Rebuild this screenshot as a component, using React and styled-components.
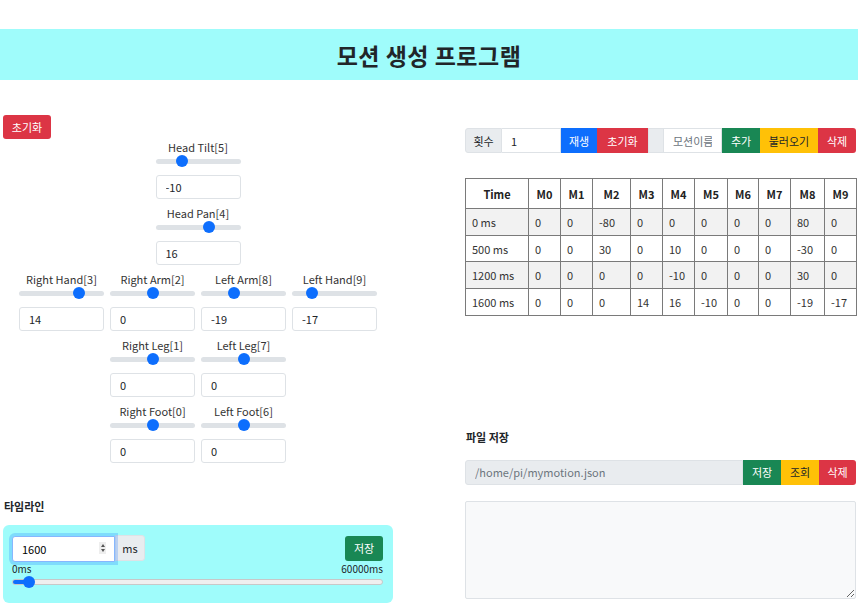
import React from "react";
import styled, { createGlobalStyle } from "styled-components";

const GlobalStyle = createGlobalStyle`
  body {
    margin: 0;
    background: white;
    color: #212529;
    font-family: "Noto Sans CJK KR", "Noto Sans", sans-serif;
  }
  * { box-sizing: border-box; }
`;

const colors = {
  blue: "#0d6efd",
  red: "#dc3545",
  green: "#198754",
  yellow: "#ffc107",
  cyan: "#9ffcfb",
};

const Header = styled.header`
  margin-top: 29px;
  height: 51px;
  background: ${colors.cyan};
  display: flex;
  align-items: center;
  justify-content: center;
`;

const Title = styled.h1`
  margin: 0;
  font-size: 23px;
  font-weight: 700;
  letter-spacing: 0.5px;
`;

const Main = styled.main`
  display: grid;
  grid-template-columns: 390px 391px;
  column-gap: 72px;
  padding: 0 2px 0 3px;
`;

const LeftCol = styled.section`
  padding-top: 33px;
`;

const RightCol = styled.section`
  padding-top: 48px;
`;

const Button = styled.button`
  height: ${(p) => p.h || 25}px;
  width: ${(p) => p.w}px;
  border: none;
  border-radius: ${(p) => (p.round ? "3px" : "0")};
  background: ${(p) => colors[p.color]};
  color: ${(p) => (p.color === "yellow" ? "#212529" : "white")};
  font-family: inherit;
  font-size: 11px;
  padding: 0;
  flex-shrink: 0;
  &:last-child {
    border-radius: ${(p) => (p.round ? "3px" : "0 3px 3px 0")};
  }
`;

const Sliders = styled.div`
  margin-top: 1px;
  display: flex;
  flex-direction: column;
`;

const SliderRow = styled.div`
  display: flex;
  justify-content: center;
  gap: 6px;
`;

const Group = styled.div`
  width: 85px;
  display: flex;
  flex-direction: column;
  align-items: center;
  padding-bottom: 7px;
`;

const Label = styled.div`
  font-size: 11px;
  line-height: 14px;
  color: #333;
`;

const Range = styled.input`
  -webkit-appearance: none;
  appearance: none;
  width: 100%;
  height: 14px;
  margin: 0;
  background: transparent;
  &::-webkit-slider-runnable-track {
    height: 5px;
    border-radius: 3px;
    background: #dee2e6;
  }
  &::-webkit-slider-thumb {
    -webkit-appearance: none;
    width: 12px;
    height: 12px;
    border-radius: 50%;
    background: ${colors.blue};
    margin-top: -3.5px;
  }
`;

const Field = styled.input`
  width: 100%;
  height: 24px;
  margin-top: 7px;
  border: 1px solid #dee2e6;
  border-radius: 3px;
  padding: 0 9px;
  font-family: inherit;
  font-size: 11px;
  color: #212529;
  background: white;
  outline: none;
`;

const SectionTitle = styled.div`
  font-size: 11px;
  line-height: 14px;
  font-weight: 700;
  margin-top: ${(p) => p.top}px;
  padding-left: 1px;
`;

const TimelineBox = styled.div`
  margin-top: 12px;
  background: ${colors.cyan};
  border-radius: 6px;
  height: 78px;
  padding: 10px 10px 0 9px;
`;

const TimelineTop = styled.div`
  display: flex;
  align-items: center;
  justify-content: space-between;
`;

const TimeGroup = styled.div`
  display: flex;
  align-items: center;
`;

const TimeInputWrap = styled.div`
  position: relative;
  width: 103px;
  height: 26px;
`;

const TimeInput = styled.input`
  width: 100%;
  height: 100%;
  border: 1px solid #86b7fe;
  border-radius: 3px 0 0 3px;
  box-shadow: 0 0 0 3px rgba(13, 110, 253, 0.22);
  padding: 0 9px;
  font-family: inherit;
  font-size: 11px;
  outline: none;
`;

const Spinner = styled.div`
  position: absolute;
  right: 9px;
  top: 7px;
  width: 7px;
  height: 12px;
  background: #eee;
  display: flex;
  flex-direction: column;
  align-items: center;
  justify-content: center;
  gap: 2px;
  &::before,
  &::after {
    content: "";
    border-left: 2px solid transparent;
    border-right: 2px solid transparent;
  }
  &::before { border-bottom: 3px solid #555; }
  &::after { border-top: 3px solid #555; }
`;

const Addon = styled.span`
  display: flex;
  align-items: center;
  justify-content: center;
  width: ${(p) => p.w}px;
  height: ${(p) => p.h || 25}px;
  background: #e9ecef;
  border: 1px solid #dee2e6;
  border-radius: ${(p) => p.radius || "0"};
  font-size: 11px;
  color: #212529;
  flex-shrink: 0;
`;

const ScaleRow = styled.div`
  display: flex;
  justify-content: space-between;
  font-size: 10px;
  line-height: 12px;
  margin-top: 2px;
`;

const TimeRange = styled.input`
  -webkit-appearance: none;
  appearance: none;
  display: block;
  width: 100%;
  height: 12px;
  margin: 1px 0 0;
  background: transparent;
  &::-webkit-slider-runnable-track {
    height: 6px;
    border-radius: 3px;
    border: 1px solid #c8c8c8;
    background: linear-gradient(
      to right,
      ${colors.blue} 0 ${(p) => p.$fill}%,
      #efefef ${(p) => p.$fill}% 100%
    );
  }
  &::-webkit-slider-thumb {
    -webkit-appearance: none;
    width: 12px;
    height: 12px;
    border-radius: 50%;
    background: ${colors.blue};
    margin-top: -4px;
  }
`;

const Toolbar = styled.div`
  display: flex;
  height: 25px;
  margin-top: ${(p) => p.top || 0}px;
`;

const BarInput = styled.input`
  width: ${(p) => p.w}px;
  height: 25px;
  border: 1px solid #dee2e6;
  border-left: none;
  padding: 0 9px;
  font-family: inherit;
  font-size: 11px;
  color: #212529;
  background: ${(p) => (p.disabled ? "#e9ecef" : "white")};
  outline: none;
  flex-shrink: 0;
  &::placeholder { color: #6c757d; }
  &:first-child {
    border-left: 1px solid #dee2e6;
    border-radius: 3px 0 0 3px;
  }
`;

const Table = styled.table`
  margin-top: 25px;
  width: 391px;
  border-collapse: collapse;
  table-layout: fixed;
  font-size: 11px;
  color: #333;
`;

const Th = styled.th`
  height: 30px;
  border: 1.5px solid #7a7a7a;
  font-weight: 700;
  text-align: center;
  color: #222;
  width: ${(p) => p.w}px;
`;

const Tr = styled.tr`
  background: ${(p) => (p.striped ? "#f2f2f2" : "white")};
`;

const Td = styled.td`
  height: 26.7px;
  border: 1.5px solid #7a7a7a;
  padding: 0 6px;
`;

const TextArea = styled.textarea`
  display: block;
  margin-top: 16px;
  width: 391px;
  height: 98px;
  border: 1px solid #dee2e6;
  border-radius: 2px;
  background: #f8f9fa;
  resize: vertical;
`;

const joints = [
  [["Head Tilt[5]", "-10", 28]],
  [["Head Pan[4]", "16", 65]],
  [
    ["Right Hand[3]", "14", 74],
    ["Right Arm[2]", "0", 50],
    ["Left Arm[8]", "-19", 37],
    ["Left Hand[9]", "-17", 19],
  ],
  [
    ["Right Leg[1]", "0", 50],
    ["Left Leg[7]", "0", 50],
  ],
  [
    ["Right Foot[0]", "0", 50],
    ["Left Foot[6]", "0", 50],
  ],
];

const colWidths = [63, 32, 32, 38, 32, 32, 33, 31, 32, 34, 32];
const heads = ["Time", "M0", "M1", "M2", "M3", "M4", "M5", "M6", "M7", "M8", "M9"];
const rows = [
  ["0 ms", 0, 0, -80, 0, 0, 0, 0, 0, 80, 0],
  ["500 ms", 0, 0, 30, 0, 10, 0, 0, 0, -30, 0],
  ["1200 ms", 0, 0, 0, 0, -10, 0, 0, 0, 30, 0],
  ["1600 ms", 0, 0, 0, 14, 16, -10, 0, 0, -19, -17],
];

const JointControl = ({ label, value, pos }) => (
  <Group>
    <Label>{label}</Label>
    <Range type="range" min="0" max="100" defaultValue={pos} />
    <Field defaultValue={value} />
  </Group>
);

export default function App() {
  const time = 1600;
  const fill = (time / 60000) * 100 + 1;
  return (
    <>
      <GlobalStyle />
      <Header>
        <Title>모션 생성 프로그램</Title>
      </Header>
      <Main>
        <LeftCol>
          <Button color="red" w={48} h={24} round>
            초기화
          </Button>
          <Sliders>
            {joints.map((row, i) => (
              <SliderRow key={i}>
                {row.map(([label, value, pos]) => (
                  <JointControl key={label} label={label} value={value} pos={pos} />
                ))}
              </SliderRow>
            ))}
          </Sliders>
          <SectionTitle top={29}>타임라인</SectionTitle>
          <TimelineBox>
            <TimelineTop>
              <TimeGroup>
                <TimeInputWrap>
                  <TimeInput defaultValue={time} />
                  <Spinner />
                </TimeInputWrap>
                <Addon w={30} h={26} radius="0 3px 3px 0">
                  ms
                </Addon>
              </TimeGroup>
              <Button color="green" w={38} h={25} round>
                저장
              </Button>
            </TimelineTop>
            <ScaleRow>
              <span>0ms</span>
              <span>60000ms</span>
            </ScaleRow>
            <TimeRange type="range" min="0" max="60000" defaultValue={time} $fill={fill} />
          </TimelineBox>
        </LeftCol>

        <RightCol>
          <Toolbar>
            <Addon w={37} radius="3px 0 0 3px">
              횟수
            </Addon>
            <BarInput w={59} defaultValue="1" />
            <Button color="blue" w={36}>
              재생
            </Button>
            <Button color="red" w={51}>
              초기화
            </Button>
            <Addon w={16} />
            <BarInput w={58} placeholder="모션이름" />
            <Button color="green" w={38}>
              추가
            </Button>
            <Button color="yellow" w={58}>
              불러오기
            </Button>
            <Button color="red" w={38}>
              삭제
            </Button>
          </Toolbar>

          <Table>
            <thead>
              <tr>
                {heads.map((h, i) => (
                  <Th key={h} w={colWidths[i]}>
                    {h}
                  </Th>
                ))}
              </tr>
            </thead>
            <tbody>
              {rows.map((r, i) => (
                <Tr key={r[0]} striped={i % 2 === 0}>
                  {r.map((c, j) => (
                    <Td key={j}>{c}</Td>
                  ))}
                </Tr>
              ))}
            </tbody>
          </Table>

          <SectionTitle top={114}>파일 저장</SectionTitle>
          <Toolbar top={16}>
            <BarInput w={278} disabled placeholder="/home/pi/mymotion.json" />
            <Button color="green" w={38}>
              저장
            </Button>
            <Button color="yellow" w={38}>
              조회
            </Button>
            <Button color="red" w={37}>
              삭제
            </Button>
          </Toolbar>
          <TextArea />
        </RightCol>
      </Main>
    </>
  );
}
